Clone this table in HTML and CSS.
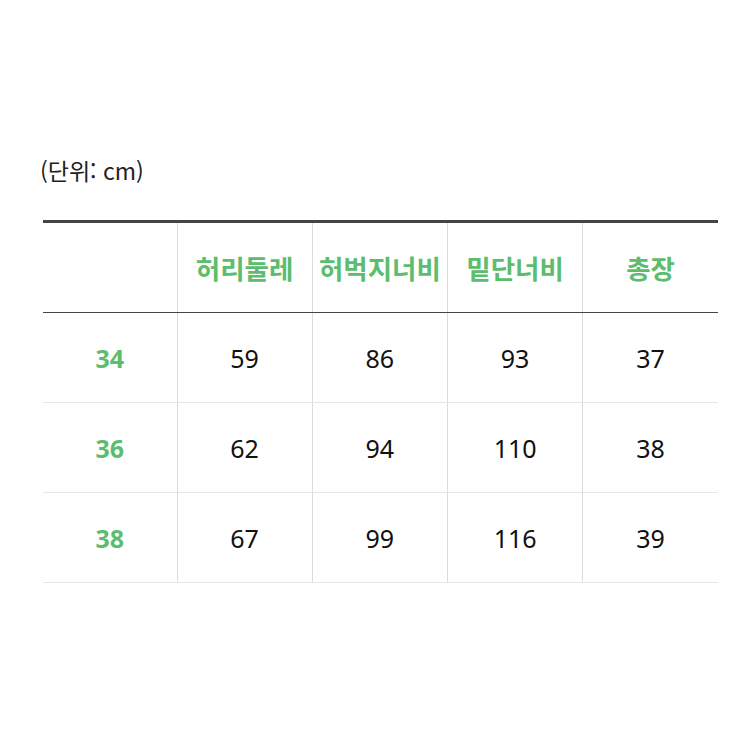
FILE: index.html
```html
<!DOCTYPE html>
<html lang="ko">
<head>
<meta charset="utf-8">
<link rel="stylesheet" href="styles.css">
</head>
<body>
<div class="wrap">
  <p class="unit">(단위: cm)</p>
  <table class="size">
    <colgroup><col class="c-first"><col><col><col><col></colgroup>
    <thead>
      <tr><th></th><th>허리둘레</th><th>허벅지너비</th><th>밑단너비</th><th>총장</th></tr>
    </thead>
    <tbody>
      <tr><th>34</th><td>59</td><td>86</td><td>93</td><td>37</td></tr>
      <tr><th>36</th><td>62</td><td>94</td><td>110</td><td>38</td></tr>
      <tr><th>38</th><td>67</td><td>99</td><td>116</td><td>39</td></tr>
    </tbody>
  </table>
</div>
</body>
</html>
```
FILE: styles.css
```css
html, body { margin: 0; padding: 0; background: #fff; }
body { font-family: "Noto Sans", "Noto Sans CJK KR", sans-serif; }
.wrap { padding: 153px 32px 0 43px; }
.unit { margin: 0 0 0 -3px; font-size: 23px; line-height: 34px; color: #222; font-family: "Noto Sans CJK KR", sans-serif; }
.size { margin-top: 33px; width: 675px; border-collapse: collapse; table-layout: fixed; border-top: 3px solid #444; }
.c-first { width: 134px; }
.size th, .size td { text-align: center; padding: 0; border-left: 1px solid #dcdcdc; }
.size tr > :first-child { border-left: none; }
.size thead th { height: 89px; border-bottom: 1px solid #444; color: #5bbd6d; font-weight: 700; font-size: 26.5px; font-family: "Noto Sans CJK KR", sans-serif; }
.size tbody th, .size tbody td { height: 89px; border-bottom: 1px solid #e6e6e6; font-size: 25px; }
.size tbody th { color: #5bbd6d; font-weight: 700; }
.size tbody td { color: #111; font-weight: 400; }
```
